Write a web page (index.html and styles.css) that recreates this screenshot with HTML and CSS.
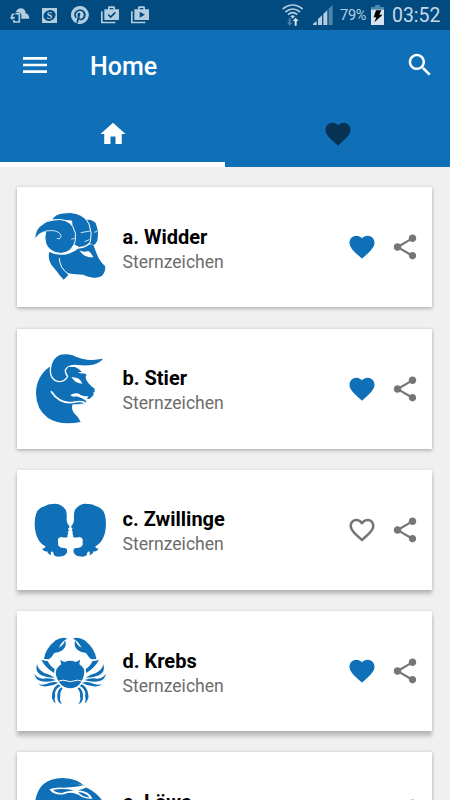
FILE: index.html
```html
<!DOCTYPE html>
<html lang="de">
<head>
    <meta charset="UTF-8">
    <meta name="viewport" content="width=device-width, initial-scale=1.0">
    <title>Sternzeichen</title>
    <link rel="stylesheet" href="styles.css">
</head>
<body>
    <!-- Shared icons -->
    <svg class="sprite" aria-hidden="true">
        <symbol id="heart" viewBox="0 0 24 24"><path d="M12 21.35l-1.45-1.32C5.4 15.36 2 12.28 2 8.5 2 5.42 4.42 3 7.5 3c1.74 0 3.41.81 4.5 2.09C13.09 3.81 14.76 3 16.5 3 19.58 3 22 5.42 22 8.5c0 3.78-3.4 6.86-8.55 11.54L12 21.35z"/></symbol>
        <symbol id="heart-outline" viewBox="0 0 24 24"><path d="M16.5 3c-1.74 0-3.41.81-4.5 2.09C10.91 3.81 9.24 3 7.5 3 4.42 3 2 5.42 2 8.5c0 3.78 3.4 6.86 8.55 11.54L12 21.35l1.45-1.32C18.6 15.36 22 12.28 22 8.5 22 5.42 19.58 3 16.5 3zm-4.4 15.55l-.1.1-.1-.1C7.14 14.24 4 11.39 4 8.5 4 6.5 5.5 5 7.5 5c1.54 0 3.04.99 3.57 2.36h1.87C13.46 5.99 14.96 5 16.5 5c2 0 3.5 1.5 3.5 3.5 0 2.89-3.14 5.74-7.9 10.05z"/></symbol>
        <symbol id="share" viewBox="0 0 24 24"><path d="M18 16.08c-.76 0-1.44.3-1.96.77L8.91 12.7c.05-.23.09-.46.09-.7s-.04-.47-.09-.7l7.05-4.11c.54.5 1.25.81 2.04.81 1.66 0 3-1.34 3-3s-1.34-3-3-3-3 1.34-3 3c0 .24.04.47.09.7L8.04 9.81C7.5 9.31 6.79 9 6 9c-1.66 0-3 1.34-3 3s1.34 3 3 3c.79 0 1.5-.31 2.04-.81l7.12 4.16c-.05.21-.08.43-.08.65 0 1.61 1.31 2.92 2.92 2.92s2.92-1.31 2.92-2.92-1.31-2.92-2.92-2.92z"/></symbol>
    </svg>

    <!-- Status Bar -->
    <div class="status-bar">
        <div class="notifications">
            <svg width="20" height="18" viewBox="0 0 60 54"><path fill="currentColor" d="M18 18Q22 6 34 7Q46 9 47 22Q57 24 58 38H34V25Q32 19 24 19Z"/><path fill="none" stroke="currentColor" stroke-width="5" d="M16 23H28V48H12V42M6 36V27Q7 24 13 24M2 33L6 38L14 34"/></svg>
            <svg width="15" height="15" viewBox="0 0 46 46"><rect width="46" height="46" fill="currentColor"/><ellipse class="dark" cx="23" cy="23" rx="19" ry="16" transform="rotate(-25 23 23)"/><text class="coin" x="23" y="34" text-anchor="middle">S</text></svg>
            <svg width="18" height="18" viewBox="0 0 24 24"><path fill="currentColor" d="M12 0C5.37 0 0 5.37 0 12c0 5.08 3.16 9.42 7.62 11.16-.1-.95-.2-2.4.04-3.44l1.4-5.96s-.36-.72-.36-1.78c0-1.66.97-2.91 2.17-2.91 1.02 0 1.52.77 1.52 1.69 0 1.03-.66 2.57-1 4-.28 1.2.6 2.17 1.78 2.17 2.13 0 3.77-2.25 3.77-5.49 0-2.87-2.06-4.88-5.01-4.88-3.41 0-5.42 2.56-5.42 5.21 0 1.03.4 2.14.89 2.74.1.12.11.22.08.34l-.33 1.36c-.05.22-.17.27-.4.16-1.5-.7-2.43-2.89-2.43-4.65C4.32 7.93 7.07 4.5 12.25 4.5c4.16 0 7.4 2.97 7.4 6.93 0 4.14-2.61 7.47-6.23 7.47-1.22 0-2.36-.63-2.75-1.38l-.75 2.85c-.27 1.04-1 2.35-1.49 3.15A12 12 0 1 0 12 0z"/></svg>
            <svg width="18" height="18" viewBox="0 0 54 54"><path fill="currentColor" d="M0 16H5V47H43V52H0ZM10 10H21V4Q21 1 25 1H38Q42 1 42 4V10H54V42H10ZM26 6V10H37V6Z"/><path class="tick" d="M22 26L29 33L43 19"/></svg>
            <svg width="18" height="18" viewBox="0 0 54 54"><path fill="currentColor" d="M0 16H5V47H43V52H0ZM10 10H21V4Q21 1 25 1H38Q42 1 42 4V10H54V42H10ZM26 6V10H37V6Z"/><path class="dark" d="M26 17V35L42 26Z"/></svg>
        </div>
        <div class="system">
            <svg class="wifi" width="22" height="22" viewBox="0 0 66 66"><g fill="none" stroke="currentColor" stroke-width="5"><path d="M2 15Q32 -9 62 15"/><path d="M10 24Q32 6 54 24"/><path d="M18 32Q32 20 46 32"/></g><path fill="currentColor" d="M25 37Q32 31 39 37L32 44Z"/><path class="faded" d="M20 43H26V56H31L23 65L15 56H20Z"/><path class="bright" d="M38 65H44V51H50L41 41L32 51H38Z"/></svg>
            <svg class="signal" width="20" height="20" viewBox="0 0 60 60"><path fill="currentColor" d="M0 60V56L11 48V60ZM15 60V42L27 31V60ZM31 60V27L43 15V60Z"/><path class="faded" d="M47 60V11L59 0V60Z"/></svg>
            <span class="percent">79%</span>
            <svg class="battery" width="13" height="20" viewBox="0 0 39 60"><path class="faded" d="M12 0H27V6H39V17H0V6H12Z"/><path class="bright" d="M0 14H39V60H0Z"/><path class="bolt" d="M15 16H31L25 29H35L10 52L16 37H8Z"/></svg>
            <span class="clock">03:52</span>
        </div>
    </div>

    <!-- App Bar -->
    <header class="app-bar">
        <div class="toolbar">
            <svg class="menu" viewBox="0 0 24 24"><path d="M3 18h18v-2H3v2zm0-5h18v-2H3v2zm0-7v2h18V6H3z"/></svg>
            <h1>Home</h1>
            <svg class="search" viewBox="0 0 24 24"><path d="M15.5 14h-.79l-.28-.27C15.41 12.59 16 11.11 16 9.5 16 5.91 13.09 3 9.5 3S3 5.91 3 9.5 5.91 16 9.5 16c1.61 0 3.09-.59 4.23-1.57l.27.28v.79l5 4.99L20.49 19l-4.99-5zm-6 0C7.01 14 5 11.99 5 9.5S7.01 5 9.5 5 14 7.01 14 9.5 11.99 14 9.5 14z"/></svg>
        </div>
        <nav class="tabs">
            <a class="tab active"><svg class="icon" viewBox="0 0 24 24"><path d="M10 20v-6h4v6h5v-8h3L12 3 2 12h3v8z"/></svg></a>
            <a class="tab"><svg class="icon"><use href="#heart"/></svg></a>
        </nav>
    </header>

    <!-- Zodiac List -->
    <main class="list">
        <article class="card">
            <svg class="sign" viewBox="66 53 234 300">
                <path d="M228 122Q246 118 257 132Q268 160 262 184Q256 196 250 198Q241 196 238 186Z"/>
                <path class="edge thin" d="M124 121Q138 102 160 101Q182 97 200 103Q226 111 237 134Q248 163 241 188Q228 204 206 204L190 195L185 125Z"/>
                <path d="M118 218Q111 244 132 266Q144 280 149 288L161 301L175 287L171 282Q198 286 220 286Q230 292 252 295Q265 296 275 290Q288 278 285 260Q274 251 266 237Q257 216 251 199Q240 190 233 199Q221 207 204 208Q178 228 151 226Q133 226 118 218Z"/>
                <path class="edge thin" d="M74 181Q75 148 96 136Q108 124 131 122Q170 115 188 141Q200 160 196 184Q189 210 168 219Q154 225 138 220Q112 211 106 188Q103 174 107 157Q88 158 74 181Z"/>
                <path class="line fine" d="M107 155Q145 149 153 168Q153 182 141 177M184 180L194 177M212 160L240 155M224 187L238 181M253 159L262 155"/>
                <path class="line" d="M148 236Q148 267 178 286"/>
                <path class="cut" d="M208 213Q221 220 235 215Q244 220 250 234Q221 235 208 213Z"/>
            </svg>
            <div class="text"><h2>a. Widder</h2><p>Sternzeichen</p></div>
            <svg class="icon fav"><use href="#heart"/></svg>
            <svg class="icon"><use href="#share"/></svg>
        </article>

        <article class="card">
            <svg class="sign" viewBox="66 50 234 300">
                <path d="M118 134Q78 163 78 214Q79 261 114 287Q151 311 212 299Q207 285 192 272Q183 260 188 246H224Q230 241 229 230H238Q246 224 252 216L249 212L254 208V199Q236 188 228 171Q225 164 229 157L219 152Q208 139 195 134Z"/>
                <path class="edge" d="M285 106Q266 130 236 131Q216 132 193 129Q172 130 166 143Q166 156 173 162Q166 178 146 178Q119 173 121 141Q123 107 151 95Q169 91 189 97Q215 111 248 111Q268 109 285 106Z"/>
                <path d="M174 134Q202 132 216 151Q228 151 229 160Q200 160 177 155Z"/>
                <path class="cut" d="M184 165Q209 163 217 184Q199 183 192 174ZM203 149Q213 155 228 153L217 149Z"/>
                <path class="line thick" d="M123 207Q151 249 195 239Q211 235 226 241"/>
                <path class="cut" d="M181 218Q192 211 207 214Q215 222 235 222Q230 231 229 236Q216 225 199 222Q187 225 181 218Z"/>
                <path class="cut" d="M196 246Q214 245 230 241V247Z"/>
            </svg>
            <div class="text"><h2>b. Stier</h2><p>Sternzeichen</p></div>
            <svg class="icon fav"><use href="#heart"/></svg>
            <svg class="icon"><use href="#share"/></svg>
        </article>

        <article class="card raised">
            <svg class="sign" viewBox="66 48 234 300">
                <g id="twin"><path d="M167 137Q151 117 129 120Q115 119 105 126Q74 132 74 179Q75 230 106 247Q105 256 97 252Q99 264 112 262Q112 270 124 274Q120 267 125 262Q133 266 131 273Q139 280 154 277Q167 276 171 265Q174 253 163 252Q150 253 144 243V226Q145 220 154 219Q168 223 173 218Q171 212 175 209L173 204L177 200L174 194Q181 190 177 185Q169 175 170 165Q171 145 167 137Z"/></g>
                <use href="#twin" transform="translate(362 0) scale(-1 1)"/>
            </svg>
            <div class="text"><h2>c. Zwillinge</h2><p>Sternzeichen</p></div>
            <svg class="icon"><use href="#heart-outline"/></svg>
            <svg class="icon"><use href="#share"/></svg>
        </article>

        <article class="card high">
            <svg class="sign" viewBox="66 48 234 300">
                <path d="M154 178L151 165L163 171Q181 163 198 171L210 164L208 178Q227 189 222 209Q213 248 181 250Q148 248 138 210Q134 190 154 178Z"/>
                <g id="claw"><path d="M102 162Q105 132 137 106Q157 94 172 101Q156 107 147 128Q163 119 165 105Q172 124 157 136Q146 144 133 144Q125 157 117 163ZM94 165L114 169Q118 182 134 192L132 204Q107 189 94 165ZM81 177Q84 194 103 204Q122 208 134 219Q112 219 94 211Q74 201 81 177ZM73 206Q82 219 99 221Q119 218 138 225Q119 232 94 229Q76 224 73 206ZM84 237Q95 242 111 236Q128 228 145 233Q129 243 110 244Q94 246 84 237ZM145 238L152 243Q137 250 135 265Q137 275 134 284L137 295Q123 284 126 269Q129 246 145 238ZM154 247L158 251Q149 260 151 274Q147 285 156 298Q141 291 142 276Q141 256 154 247Z"/></g>
                <use href="#claw" transform="translate(361 0) scale(-1 1)"/>
                <path class="line" d="M140 230Q158 221 181 230Q204 221 222 230"/>
            </svg>
            <div class="text"><h2>d. Krebs</h2><p>Sternzeichen</p></div>
            <svg class="icon fav"><use href="#heart"/></svg>
            <svg class="icon"><use href="#share"/></svg>
        </article>

        <article class="card">
            <svg class="sign" viewBox="96 83 234 300">
                <path d="M105 206Q113 132 188 131Q235 132 257 159Q291 174 312 206V320H105Z"/>
                <path class="cut" d="M148 165Q167 157 192 160Q221 158 248 154Q230 145 201 147Q239 145 260 159Q246 166 233 168Q266 169 278 193Q253 195 237 182Q210 170 192 180Q161 184 148 165Z"/>
                <path d="M159 167Q187 161 221 168Q196 172 186 176Q169 176 159 167ZM234 173Q256 174 269 190Q247 188 234 173Z"/>
            </svg>
            <div class="text"><h2>e. Löwe</h2><p>Sternzeichen</p></div>
            <svg class="icon"><use href="#heart-outline"/></svg>
            <svg class="icon"><use href="#share"/></svg>
        </article>
    </main>
</body>
</html>
```

FILE: styles.css
```css
/* General Styles */
* {
    box-sizing: border-box;
}

body {
    font-family: Roboto, sans-serif;
    margin: 0;
    height: 800px;
    background: #f0f0f0;
    color: #000;
    overflow: hidden;
}

svg {
    display: block;
    flex: none;
}

.sprite {
    display: none;
}

.icon {
    width: 30px;
    height: 30px;
    fill: #757575;
}

/* Status Bar */
.status-bar {
    display: flex;
    justify-content: space-between;
    height: 30px;
    padding: 0 9.5px 0 10px;
    background: #024b80;
    color: #b3cde0;
}

.notifications {
    display: flex;
    align-items: center;
    gap: 12px;
}

.notifications svg:nth-child(2) {
    margin-right: 2px;
}

.system {
    display: flex;
    align-items: center;
}

.wifi {
    margin-right: 9px;
}

.signal {
    margin-right: 7px;
}

.percent {
    width: 28px;
    font-size: 14.5px;
    letter-spacing: -0.2px;
    margin-right: 3px;
}

.battery {
    margin-right: 8px;
}

.clock {
    font-size: 19.5px;
    margin-top: 1px;
    color: #c4d8e6;
}

.dark {
    fill: #024b80;
}

.coin {
    font: bold 31px "Liberation Serif", serif;
    fill: #b3cde0;
}

.tick {
    fill: none;
    stroke: #024b80;
    stroke-width: 5;
}

.faded {
    fill: #4f86ab;
}

.bright {
    fill: #d5e4ee;
}

.bolt {
    fill: #000;
}

/* App Bar */
.app-bar {
    height: 137px;
    background: #0f70b8;
}

.toolbar {
    display: flex;
    align-items: center;
    height: 69px;
    padding: 0 15px 0 19px;
}

.toolbar svg {
    fill: #fff;
}

.menu {
    width: 32px;
    height: 32px;
}

.search {
    width: 30px;
    height: 30px;
}

.toolbar h1 {
    flex: 1;
    margin: 3px 0 0 39px;
    font-size: 25px;
    font-weight: 500;
    color: #fff;
}

.tabs {
    display: flex;
    height: 68px;
}

.tab {
    flex: 1;
    display: flex;
    justify-content: center;
    padding-top: 19.5px;
}

.tab .icon {
    fill: #083254;
}

.tab.active {
    border-bottom: 5px solid #fff;
}

.tab.active .icon {
    fill: #fff;
}

/* Zodiac List */
.list {
    display: flex;
    flex-direction: column;
    gap: 21.3px;
    padding: 20.3px 17.6px 0 17.3px;
}

.card {
    display: flex;
    align-items: center;
    flex: none;
    height: 120px;
    padding: 0 12.5px 0 14.7px;
    background: #fff;
    box-shadow: 0 0 3px rgba(0, 0, 0, 0.14), 0 2px 4px rgba(0, 0, 0, 0.2);
}

.card.raised {
    box-shadow: 0 0 3px rgba(0, 0, 0, 0.12), 0 4px 4px rgba(0, 0, 0, 0.22);
}

.card.high {
    box-shadow: 0 0 3px rgba(0, 0, 0, 0.12), 0 5px 4px rgba(0, 0, 0, 0.22);
}

.sign {
    width: 78px;
    height: 100px;
    fill: #0f70b8;
}

.sign .edge {
    stroke: #fff;
    stroke-width: 4;
}

.sign .thin {
    stroke-width: 3;
}

.sign .line {
    fill: none;
    stroke: #fff;
    stroke-width: 3;
}

.sign .fine {
    stroke-width: 2.4;
}

.sign .thick {
    stroke-width: 5;
}

.sign .cut {
    fill: #fff;
}

.text {
    flex: 1;
    padding: 3px 0 0 12.5px;
}

.text h2 {
    margin: 0;
    font-size: 20px;
    font-weight: 700;
    line-height: 26px;
}

.text p {
    margin: 0;
    font-size: 17.6px;
    line-height: 24px;
    color: #6c6c6c;
}

.card .icon + .icon {
    margin-left: 12.5px;
}

.card .fav {
    fill: #0f70b8;
}
```
